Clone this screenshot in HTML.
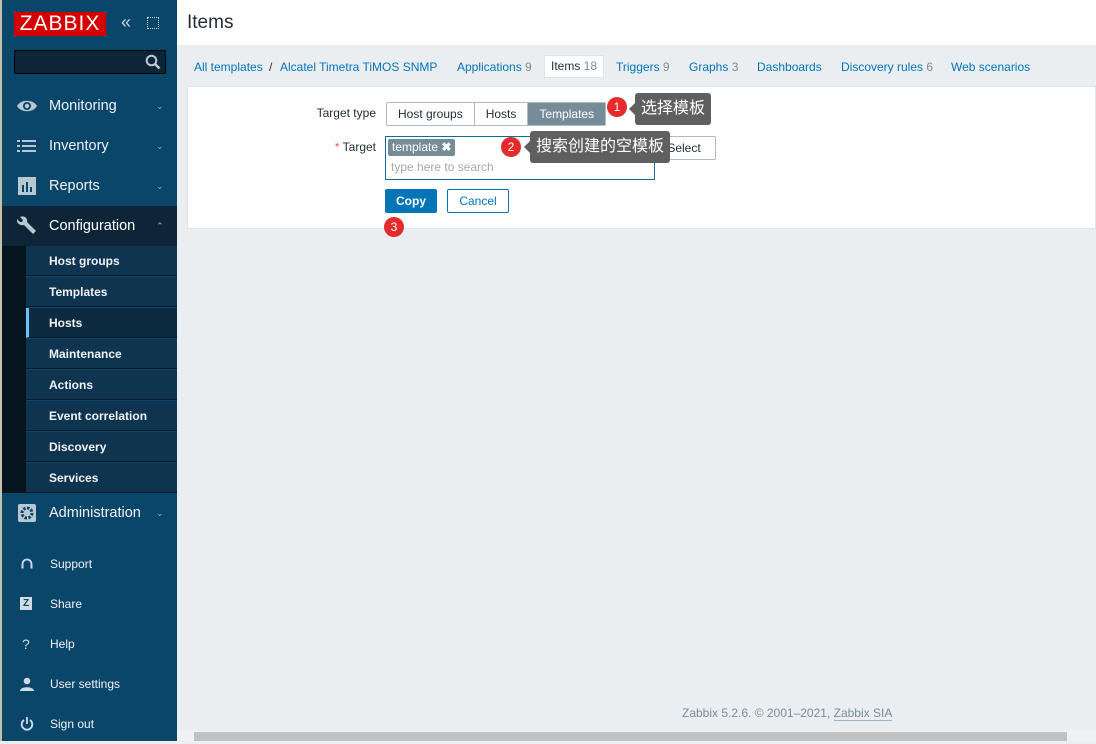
<!DOCTYPE html>
<html><head><meta charset="utf-8"><style>
*{box-sizing:border-box;margin:0;padding:0}
body{width:1096px;height:741px;overflow:hidden;background:#ebeef0;font-family:"Liberation Sans","Noto Sans CJK SC",sans-serif;font-size:12px;color:#1f2c33;position:relative}
.edge{position:absolute;left:0;top:0;width:2px;height:741px;background:#c8bfae}
.side{position:absolute;left:2px;top:0;width:175px;height:741px;background:#0a466a;color:#f2f2f2}
.logo{position:absolute;left:12px;top:12px;width:92px;height:24px;background:#d40000;color:#fff;font-size:21px;letter-spacing:1px;line-height:24px;text-align:center}
.srch{position:absolute;left:12px;top:50px;width:152px;height:24px;background:#0c2638;border:1px solid #000;border-radius:2px}
.mi{position:absolute;left:0;width:175px;height:40px;font-size:14.5px;line-height:40px}
.mi .t{position:absolute;left:47px}
.mi .c{position:absolute;left:154px;font-size:9px;color:#9fb3c4}
.ic{position:absolute;left:15px;top:10px;width:20px;height:20px}
.sub{position:absolute;left:24px;width:151px;height:30px;background:#0e3450;border-bottom:1px solid #071a26;font-size:12px;font-weight:bold;line-height:30px;padding-left:23px}
.bi{position:absolute;left:0;width:175px;height:40px;font-size:12px;line-height:40px}
.bi .t{position:absolute;left:48px}
.bi .i{position:absolute;left:18px;color:#d0dbe3}
.hdr{position:absolute;left:177px;top:0;width:919px;height:45px;background:#fff}
.hdr h1{font-weight:normal;font-size:19px;position:absolute;left:10px;top:12px;color:#1f2c33}
.tabs{position:absolute;top:55px;left:187px;height:24px;font-size:12px;line-height:24px;color:#0275b8}
.tabs span{position:absolute;white-space:nowrap}
.g{color:#768d99}
.box{position:absolute;left:187px;top:86px;width:909px;height:143px;background:#fff;border:1px solid #dfe4e7}
.lbl{position:absolute;text-align:right;width:120px;left:68px;font-size:12px}
.seg{position:absolute;left:198px;top:15px;height:24px;border:1px solid #acbbc4;border-radius:2px;display:flex;font-size:12px;line-height:22px}
.seg div{padding:0 11px;border-right:1px solid #acbbc4}
.tgt{position:absolute;left:197px;top:49px;width:270px;height:44px;border:1px solid #0b6ca0}
.tag{position:absolute;left:2px;top:2px;height:17px;background:#768d99;color:#fff;font-size:12px;line-height:17px;padding:0 4px;border-radius:2px}
.btn{position:absolute;height:24px;line-height:22px;font-size:12px;text-align:center;border-radius:2px}
.tip{position:absolute;background:#5f5f5f;color:#fff;font-size:16px;line-height:32px;padding:0 6px;border-radius:3px}
.tip:before{content:"";position:absolute;left:-6px;top:10px;border:6px solid transparent;border-left:0;border-right-color:#5f5f5f}
.num{position:absolute;width:20px;height:20px;border-radius:50%;background:#e52b2b;color:#fff;font-size:12px;line-height:20px;text-align:center}
.foot{position:absolute;left:682px;top:706px;color:#768d99;font-size:12px}
.sb{position:absolute;left:177px;top:731px;width:919px;height:10px;background:#f1f1f1}
.sb div{position:absolute;left:17px;top:1px;width:873px;height:9px;background:#c1c1c1}
</style></head><body>
<div class="edge"></div>
<div class="side">
<div class="logo">ZABBIX</div>
<div style="position:absolute;left:119px;top:12px;font-size:18px;color:#c9d6e0">«</div>
<div style="position:absolute;left:145px;top:17px;width:12px;height:12px;border:1px dotted #c9d6e0"></div>
<div class="srch"><svg style="position:absolute;right:4px;top:3px" width="16" height="16" viewBox="0 0 16 16"><circle cx="6.5" cy="6.5" r="4.8" fill="none" stroke="#b9c7d2" stroke-width="2"/><path d="M10 10l4.5 4.5" stroke="#b9c7d2" stroke-width="2.5"/></svg></div>
<div class="mi" style="top:86px"><svg class="ic" viewBox="0 0 20 20"><path d="M0 10C4 3 16 3 20 10C16 17 4 17 0 10Z" fill="#b9c7d2"/><circle cx="10" cy="10" r="4" fill="#0a466a"/><circle cx="10" cy="10" r="2.2" fill="#b9c7d2"/></svg><span class="t">Monitoring</span><span class="c">⌄</span></div>
<div class="mi" style="top:126px"><svg class="ic" viewBox="0 0 20 20" fill="#b9c7d2"><rect x="0" y="4" width="3" height="2"/><rect x="5" y="4" width="14" height="2"/><rect x="0" y="9" width="3" height="2"/><rect x="5" y="9" width="14" height="2"/><rect x="0" y="14" width="3" height="2"/><rect x="5" y="14" width="14" height="2"/></svg><span class="t">Inventory</span><span class="c">⌄</span></div>
<div class="mi" style="top:166px"><svg class="ic" viewBox="0 0 20 20"><rect x="1" y="1" width="18" height="18" fill="#b9c7d2"/><rect x="5" y="9" width="2" height="7" fill="#0a466a"/><rect x="9" y="6" width="2" height="10" fill="#0a466a"/><rect x="13" y="11" width="2" height="5" fill="#0a466a"/></svg><span class="t">Reports</span><span class="c">⌄</span></div>
<div class="mi" style="top:206px;background:#0c2638"><svg class="ic" viewBox="0 0 20 20"><path d="M3 1l3 3-1 2-2 0-3-3C-1 7 3 10 7 9l9 9 3-3-9-9C11 2 7-1 3 1Z" fill="#b9c7d2"/></svg><span class="t" style="color:#fff">Configuration</span><span class="c">⌃</span></div>
<div style="position:absolute;left:0;top:246px;width:24px;height:247px;background:#06141d"></div>
<div class="sub" style="top:246px">Host groups</div>
<div class="sub" style="top:277px">Templates</div>
<div class="sub" style="top:308px;background:#0c2a40;border-left:3px solid #68c3f0;padding-left:20px">Hosts</div>
<div class="sub" style="top:339px">Maintenance</div>
<div class="sub" style="top:370px">Actions</div>
<div class="sub" style="top:401px">Event correlation</div>
<div class="sub" style="top:432px">Discovery</div>
<div class="sub" style="top:463px">Services</div>
<div class="mi" style="top:493px"><svg class="ic" viewBox="0 0 20 20"><rect x="1" y="1" width="18" height="18" rx="2" fill="#b9c7d2"/><circle cx="10" cy="10" r="5" fill="none" stroke="#0a466a" stroke-width="3" stroke-dasharray="2.5 1.4"/><circle cx="10" cy="10" r="1.8" fill="#b9c7d2"/></svg><span class="t">Administration</span><span class="c">⌄</span></div>
<div class="bi" style="top:544px"><svg style="position:absolute;left:19px;top:14px" width="12" height="12" viewBox="0 0 12 12" fill="none" stroke="#d0dbe3" stroke-width="1.8"><path d="M1.5 9V6a4.5 4.5 0 0 1 9 0v3"/><rect x="0.5" y="7" width="2" height="3.5" fill="#d0dbe3" stroke="none"/><rect x="9.5" y="7" width="2" height="3.5" fill="#d0dbe3" stroke="none"/></svg><span class="t">Support</span></div>
<div class="bi" style="top:584px"><span class="i" style="top:13px;width:12px;height:13px;background:#d0dbe3;color:#0a466a;font-size:10px;font-weight:bold;line-height:13px;text-align:center;left:18px">Z</span><span class="t">Share</span></div>
<div class="bi" style="top:624px"><span class="i" style="left:20px;font-size:14px">?</span><span class="t">Help</span></div>
<div class="bi" style="top:664px"><svg style="position:absolute;left:18px;top:13px" width="14" height="14" viewBox="0 0 14 14" fill="#d0dbe3"><circle cx="7" cy="4" r="3.3"/><path d="M0 14C0 9 14 9 14 14Z"/></svg><span class="t">User settings</span></div>
<div class="bi" style="top:704px"><svg style="position:absolute;left:18px;top:13px" width="14" height="14" viewBox="0 0 14 14" fill="none" stroke="#d0dbe3" stroke-width="1.8"><path d="M4 3A5.3 5.3 0 1 0 10 3"/><path d="M7 0v7"/></svg><span class="t">Sign out</span></div>
</div>
<div class="hdr"><h1>Items</h1></div>
<div class="tabs">
<span style="left:7px">All templates</span><span style="left:82px;color:#1f2c33">/</span><span style="left:93px">Alcatel Timetra TiMOS SNMP</span>
<span style="left:270px">Applications <i class="g" style="font-style:normal">9</i></span>
<span style="left:357px;top:0;height:23px;background:#fff;border:1px solid #dfe4e7;padding:0 6px;line-height:21px;color:#1f2c33">Items <i class="g" style="font-style:normal">18</i></span>
<span style="left:429px">Triggers <i class="g" style="font-style:normal">9</i></span>
<span style="left:502px">Graphs <i class="g" style="font-style:normal">3</i></span>
<span style="left:570px">Dashboards</span>
<span style="left:654px">Discovery rules <i class="g" style="font-style:normal">6</i></span>
<span style="left:764px">Web scenarios</span>
</div>
<div class="box">
<div class="lbl" style="top:19px">Target type</div>
<div class="seg"><div>Host groups</div><div>Hosts</div><div style="background:#768d99;color:#fff;border:0">Templates</div></div>
<div class="lbl" style="top:53px"><span style="color:#e45959">*</span> Target</div>
<div class="tgt"><div class="tag">template <b>✖</b></div><div style="position:absolute;left:5px;top:23px;color:#a9a9a9">type here to search</div></div>
<div class="btn" style="left:464px;top:49px;width:64px;border:1px solid #acbbc4;color:#1f2c33">Select</div>
<div class="btn" style="left:197px;top:102px;width:52px;background:#0275b8;color:#fff;font-weight:bold;line-height:24px">Copy</div>
<div class="btn" style="left:259px;top:102px;width:62px;border:1px solid #0275b8;color:#0275b8">Cancel</div>
<div class="num" style="left:419px;top:10px">1</div>
<div class="tip" style="left:447px;top:6px">选择模板</div>
<div class="num" style="left:313px;top:50px">2</div>
<div class="tip" style="left:342px;top:44px">搜索创建的空模板</div>
<div class="num" style="left:196px;top:130px">3</div>
</div>
<div class="foot">Zabbix 5.2.6. © 2001–2021, <span style="border-bottom:1px solid #9fb3c4">Zabbix SIA</span></div>
<div class="sb"><div></div></div>
</body></html>
